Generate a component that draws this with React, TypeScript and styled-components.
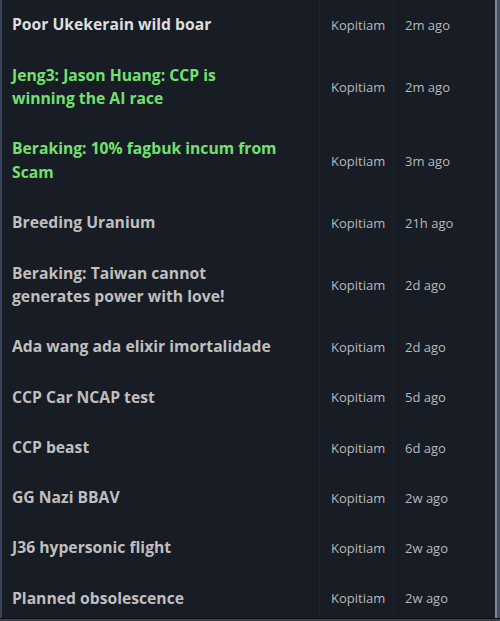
import styled, { createGlobalStyle } from 'styled-components';

const GlobalStyle = createGlobalStyle`
  html, body {
    margin: 0;
    padding: 0;
    background: #181c24;
    overflow: hidden;
  }
`

const Page = styled.div`
  display: flex;
  flex-direction: column;
  width: 500px;
  height: 621px;
  overflow: hidden;
`
const Body = styled.div`
  display: flex;
  flex: 1;
  min-height: 0;
`
const Frame = styled.div`
  flex: 1;
  border-left: 2px solid #37435a;
  background: #181c24;
  overflow: hidden;
`
const ScrollEdge = styled.div`
  width: 2px;
  background: #7f8893;
  border-right: 3px solid #46505f;
`
const BottomEdge = styled.div`
  height: 3px;
  border-top: 1px solid #0c0e12;
  background: #3a414d;
  box-sizing: border-box;
`
const Row = styled.div`
  display: grid;
  grid-template-columns: 318px 74px 1fr;
  align-items: stretch;
  font-family: "Open Sans", "Noto Sans", sans-serif;
`
const TitleCell = styled.div<{ $tone: 'hot' | 'fresh' | 'seen' }>`
  padding: 13.4px 40px 13.4px 10px;
  font-size: 15.7px;
  font-weight: 700;
  line-height: 23.5px;
  color: ${p => (p.$tone === 'hot' ? '#72e16f' : p.$tone === 'fresh' ? '#dedede' : '#bfbfbf')};
  border-right: 1px solid #1f232b;
`
const MetaCell = styled.div<{ $last?: boolean }>`
  display: flex;
  align-items: center;
  padding: 0 11px;
  font-size: 13px;
  color: #b5b9bf;
  border-right: ${p => (p.$last ? 'none' : '1px solid #1f232b')};
  white-space: nowrap;
`

type Thread = { title: string; age: string; tone: 'hot' | 'fresh' | 'seen' }

const threads: Thread[] = [
  { title: 'Poor Ukekerain wild boar', age: '2m ago', tone: 'fresh' },
  { title: 'Jeng3: Jason Huang: CCP is winning the AI race', age: '2m ago', tone: 'hot' },
  { title: 'Beraking: 10% fagbuk incum from Scam', age: '3m ago', tone: 'hot' },
  { title: 'Breeding Uranium', age: '21h ago', tone: 'seen' },
  { title: 'Beraking: Taiwan cannot generates power with love!', age: '2d ago', tone: 'seen' },
  { title: 'Ada wang ada elixir imortalidade', age: '2d ago', tone: 'seen' },
  { title: 'CCP Car NCAP test', age: '5d ago', tone: 'seen' },
  { title: 'CCP beast', age: '6d ago', tone: 'seen' },
  { title: 'GG Nazi BBAV', age: '2w ago', tone: 'seen' },
  { title: 'J36 hypersonic flight', age: '2w ago', tone: 'seen' },
  { title: 'Planned obsolescence', age: '2w ago', tone: 'seen' },
]

const App = (): JSX.Element => {
  return (
    <Page>
      <GlobalStyle />
      <Body>
        <Frame>
          {threads.map(t => (
            <Row key={t.title}>
              <TitleCell $tone={t.tone}>{t.title}</TitleCell>
              <MetaCell>Kopitiam</MetaCell>
              <MetaCell $last>{t.age}</MetaCell>
            </Row>
          ))}
        </Frame>
        <ScrollEdge />
      </Body>
      <BottomEdge />
    </Page>
  )
}

export default App;
